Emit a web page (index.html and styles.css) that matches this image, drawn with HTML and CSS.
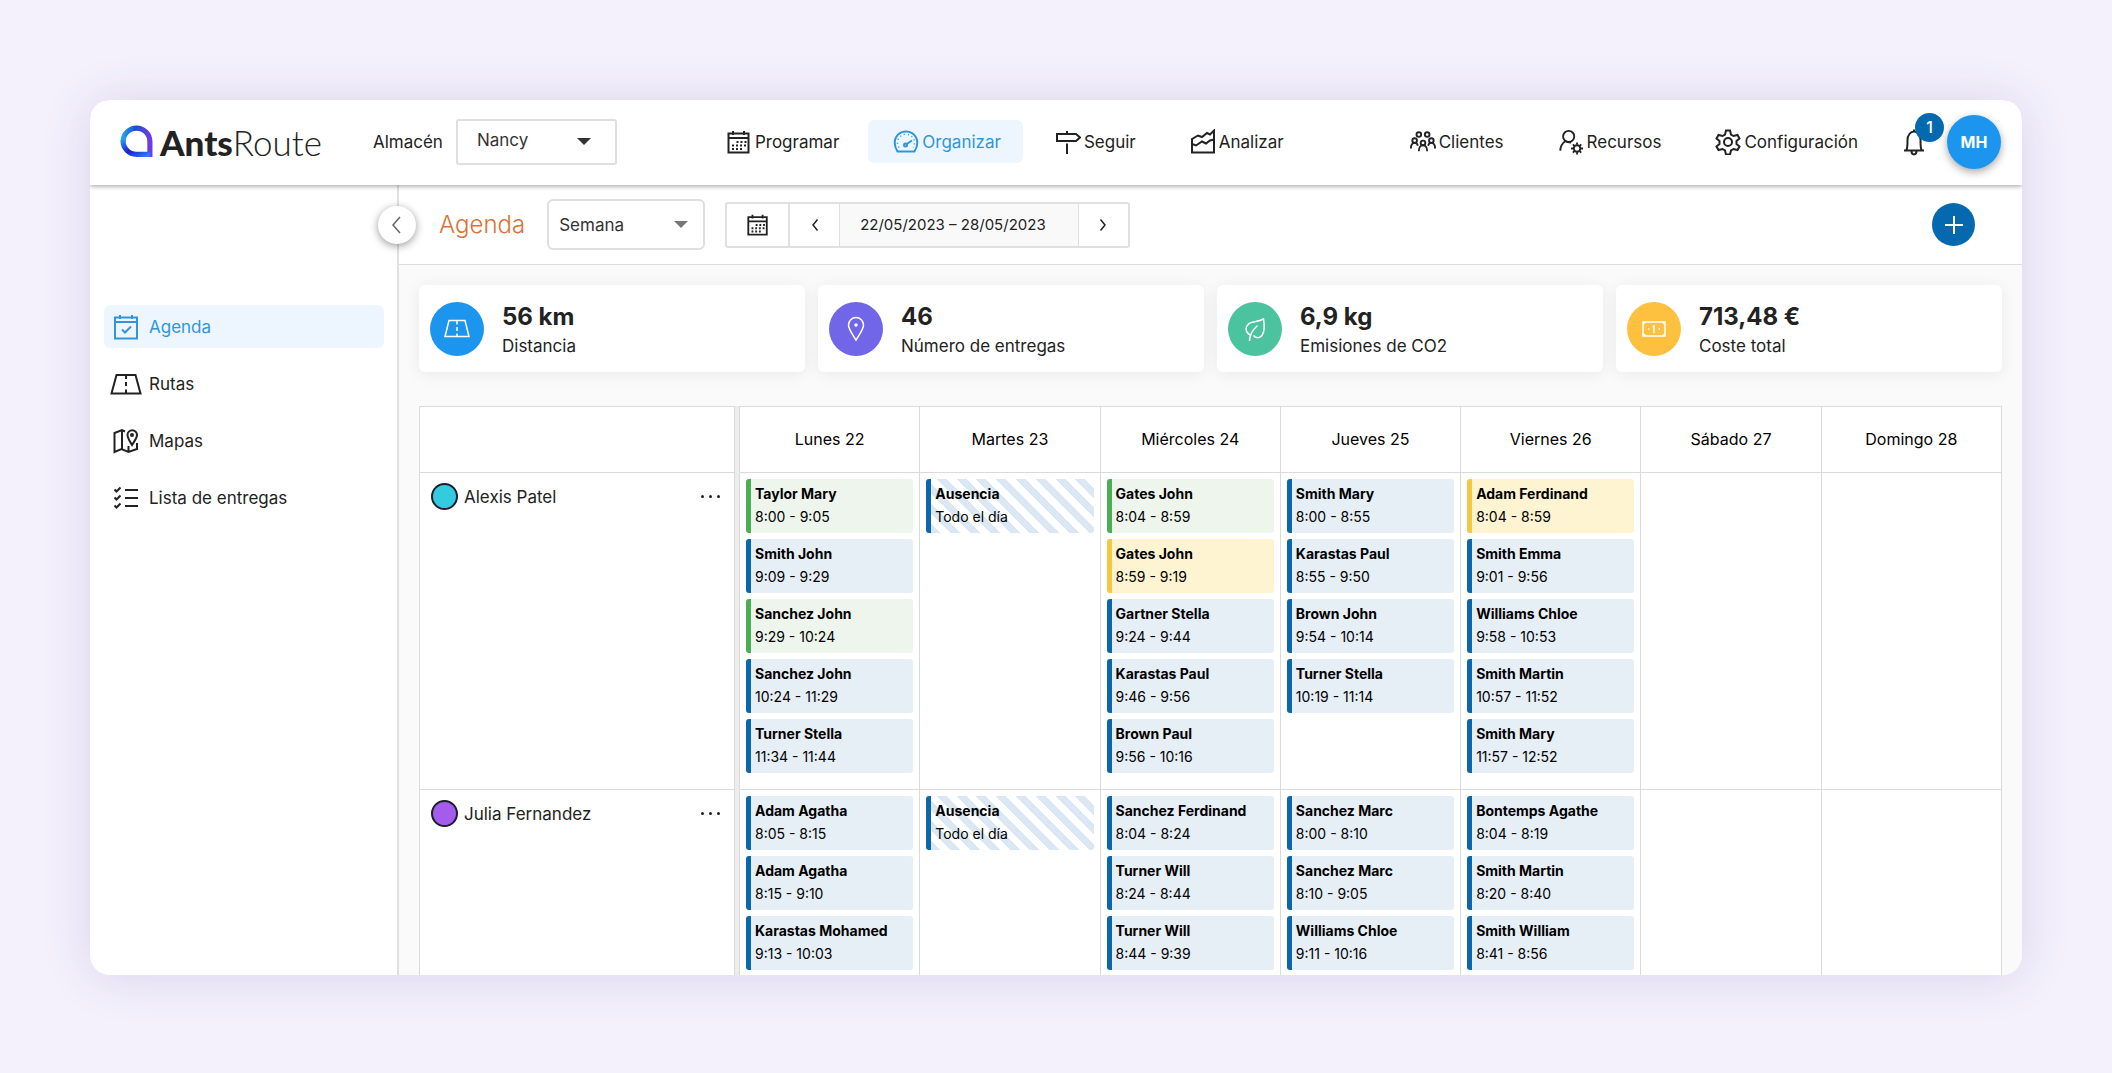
FILE: index.html
```
<!DOCTYPE html>
<html lang="es">
<head>
    <meta charset="UTF-8">
    <meta name="viewport" content="width=device-width, initial-scale=1.0">
    <title>AntsRoute - Agenda</title>
    <link rel="stylesheet" href="styles.css">
</head>
<body>
    <div class="app">
        <header class="topbar">
            <a class="logo" href="#">
                <svg viewBox="0 0 32 32" width="33" height="33" aria-hidden="true">
                    <defs>
                        <linearGradient id="logoTop" x1="0" y1="0" x2="1" y2="0">
                            <stop offset="0" stop-color="#22a3ea"/>
                            <stop offset="0.45" stop-color="#1a4fd6"/>
                            <stop offset="1" stop-color="#6d3be6"/>
                        </linearGradient>
                        <linearGradient id="logoBottom" x1="0" y1="0" x2="1" y2="1">
                            <stop offset="0" stop-color="#2a8df0"/>
                            <stop offset="0.5" stop-color="#1b1fd0"/>
                            <stop offset="1" stop-color="#2b7df2"/>
                        </linearGradient>
                    </defs>
                    <path d="M3 16A13 13 0 0 1 29 16V31" fill="none" stroke="url(#logoTop)" stroke-width="5"/>
                    <path d="M3 15A13 13 0 0 0 16 28.500H29" fill="none" stroke="url(#logoBottom)" stroke-width="5"/>
                </svg>
                <span><b>Ants</b>Route</span>
            </a>

            <div class="warehouse">
                <label for="warehouse">Almacén</label>
                <span class="select select-warehouse">
                    <select id="warehouse">
                        <option>Nancy</option>
                    </select>
                </span>
            </div>

            <nav class="nav nav-main">
                <a href="#">
                    <svg viewBox="0 0 26 26"><path d="M2.500 4.500h20v19h-20zM2.500 9h20"/><path d="M7 2v4M18 2v4"/><path d="M10.500 13h10M6 16.500h14M6 20h10" stroke-dasharray="2 2"/></svg>
                    Programar
                </a>
                <a href="#" class="active">
                    <svg viewBox="0 0 26 26"><path d="M4.500 22.500C-2 12 4 2.500 13 2.500S28 12 21.500 22.500z"/><path d="M6 18.500A8.500 8.500 0 1 1 20 18.500" stroke-width="1.500" stroke-dasharray="1 3"/><path d="M13 15.500l6-4"/><circle cx="12.500" cy="16" r="1.500"/></svg>
                    Organizar
                </a>
                <a href="#">
                    <svg viewBox="0 0 26 26"><path d="M2 5h19l4 3.500-4 3.500H2zM12 2v3M12 14.500V25"/></svg>
                    Seguir
                </a>
                <a href="#">
                    <svg viewBox="0 0 26 26"><path d="M2 23.500V10l6-3.500 4 1.500L17 4l3 1.500 4-4v22z"/><path d="M2 15l4 1.500 6-4 4 2 4-3 4-1"/></svg>
                    Analizar
                </a>
            </nav>

            <nav class="nav nav-side">
                <a href="#">
                    <svg viewBox="0 0 28 26"><circle cx="9.500" cy="5" r="2.500"/><circle cx="18.500" cy="5" r="2.500"/><circle cx="5" cy="11.500" r="2.500"/><circle cx="23" cy="11.500" r="2.500"/><circle cx="14" cy="14" r="2.500"/><path d="M1 20c0-4 2-6 4-6s3 1 3.500 3M27 20c0-4-2-6-4-6s-3 1-3.500 3M9.500 23c0-4 2-6.500 4.500-6.500s4.500 2.500 4.500 6.500"/></svg>
                    Clientes
                </a>
                <a href="#">
                    <svg viewBox="0 0 26 28"><circle cx="10.500" cy="8" r="6"/><path d="M1.500 23.500c0-5 2-8 5.500-10.500M7 13c2 1.500 4 1.500 6 1.500"/><circle cx="19.500" cy="21" r="3.500"/><path d="M19.500 14.500V17M19.500 25v2.500M13 21h2.500M23.500 21H26M15 16.500l2 2M22 23.500l2 2M15 25.500l2-2M22 18.500l2-2"/></svg>
                    Recursos
                </a>
                <a href="#">
                    <svg viewBox="0 0 26 26"><circle cx="13" cy="13" r="4"/><path d="M11 1.500h4l1 4 2.500 1.500 4-1 2 3.500-3 2.500v3l3 2.500-2 3.500-4-1-2.500 1.500-1 4h-4l-1-4-2.500-1.500-4 1-2-3.500 3-2.500v-3l-3-2.500 2-3.500 4 1L10 5.500z"/></svg>
                    Configuración
                </a>
            </nav>

            <div class="account">
                <button class="bell" type="button" aria-label="Notificaciones">
                    <svg viewBox="0 0 24 28"><path d="M12 1.500v2M2 22.500h20M4.500 22c1-2 1-4 1-10a6.500 8.500 0 0 1 13 0c0 6 0 8 1 10M9.500 23c0 4.500 5 4.500 5 0"/></svg>
                    <span class="badge">1</span>
                </button>
                <button class="avatar" type="button">MH</button>
            </div>
        </header>

        <div class="layout">
            <aside class="sidebar">
                <button class="collapse" type="button" aria-label="Contraer menú">
                    <svg viewBox="0 0 20 20"><path d="M13 2L6 10l7 8"/></svg>
                </button>
                <nav class="menu">
                    <a href="#" class="active">
                        <svg viewBox="0 0 32 28"><path d="M5 4.500h22v21H5zM5 9h22M10 2v4M22 2v4"/><path d="M12 16.500l3 3 6-6"/></svg>
                        Agenda
                    </a>
                    <a href="#">
                        <svg viewBox="0 0 32 28"><path d="M6.500 5h19l5 18.500h-29z"/><path d="M16 5v4M16 12v4M16 19.500v4"/></svg>
                        Rutas
                    </a>
                    <a href="#">
                        <svg viewBox="0 0 32 28"><path d="M15 4.500L12 3 4.500 6v19l7-3 7 3 8.500-3v-6M12 4v18M18.500 19v6"/><path d="M22 18c-3-5-4.500-7-4.500-10a4.500 4.500 0 0 1 9.500 0c0 3-2 5-5 10z"/><circle cx="22" cy="8" r="1" /></svg>
                        Mapas
                    </a>
                    <a href="#">
                        <svg viewBox="0 0 32 28"><path d="M4.500 5.500l2 2 4-4M4.500 13.500l2 2 4-4M4.500 21.500l2 2 4-4M15 6h13M15 14h13M15 22h13"/></svg>
                        Lista de entregas
                    </a>
                </nav>
            </aside>

            <main class="main">
                <div class="toolbar">
                    <h1>Agenda</h1>
                    <span class="select select-period">
                        <select id="period" aria-label="Periodo">
                            <option>Semana</option>
                        </select>
                    </span>
                    <div class="dates">
                        <button class="dates-calendar" type="button" aria-label="Calendario">
                            <svg viewBox="0 0 26 26"><path d="M2.500 4.500h20v19h-20zM2.500 9h20"/><path d="M7 2v4M18 2v4"/><path d="M10.500 13h10M6 16.500h14M6 20h10" stroke-dasharray="2 2"/></svg>
                        </button>
                        <button class="dates-arrow" type="button" aria-label="Anterior">
                            <svg viewBox="0 0 14 14"><path d="M9.500 1.500L5 7l4.500 5.500"/></svg>
                        </button>
                        <span class="dates-range">22/05/2023 – 28/05/2023</span>
                        <button class="dates-arrow" type="button" aria-label="Siguiente">
                            <svg viewBox="0 0 14 14"><path d="M4.500 1.500L9 7l-4.500 5.500"/></svg>
                        </button>
                    </div>
                    <button class="add" type="button" aria-label="Añadir">
                        <svg viewBox="0 0 20 20"><path d="M10 1v18M1 10h18"/></svg>
                    </button>
                </div>

                <div class="content">
                    <section class="stats">
                        <div class="stat">
                            <span class="stat-icon blue">
                                <svg viewBox="0 0 28 28"><path d="M6 5.500h16l4 16H2z"/><path d="M14 5.500v4M14 12v4M14 18.500v3"/></svg>
                            </span>
                            <div><strong>56 km</strong><span>Distancia</span></div>
                        </div>
                        <div class="stat">
                            <span class="stat-icon purple">
                                <svg viewBox="0 0 28 28"><path d="M14 25C9 17 6.500 14 6.500 10a7.500 7.500 0 0 1 15 0c0 4-2.500 7-7.500 15z"/><circle cx="14" cy="10" r="1"/></svg>
                            </span>
                            <div><strong>46</strong><span>Número de entregas</span></div>
                        </div>
                        <div class="stat">
                            <span class="stat-icon green">
                                <svg viewBox="0 0 28 28"><path d="M9 20C4 17 4 12 8 8.500c3-2 9-1.500 14.500-4.500 1 6 1 12-1 15.500-2 4-7 4-9 1"/><path d="M8.500 26c0-7 3-11 8-15.500"/></svg>
                            </span>
                            <div><strong>6,9 kg</strong><span>Emisiones de CO2</span></div>
                        </div>
                        <div class="stat">
                            <span class="stat-icon yellow">
                                <svg viewBox="0 0 28 28"><path d="M3 7h22v14H3z"/><path d="M3 9.500L5.500 7M25 9.500L22.500 7M3 18.500L5.500 21M25 18.500L22.500 21M12.500 12l1.500-1v7M8 14h1.500M18.500 14H20"/></svg>
                            </span>
                            <div><strong>713,48 €</strong><span>Coste total</span></div>
                        </div>
                    </section>

                    <table class="agenda">
                        <thead>
                            <tr>
                                <th class="resource"></th>
                                <th class="divider"></th>
                                <th>Lunes 22</th>
                                <th>Martes 23</th>
                                <th>Miércoles 24</th>
                                <th>Jueves 25</th>
                                <th>Viernes 26</th>
                                <th>Sábado 27</th>
                                <th>Domingo 28</th>
                            </tr>
                        </thead>
                        <tbody>
                            <tr>
                                <td class="resource">
                                    <div class="driver">
                                        <span class="dot cyan"></span>
                                        <span>Alexis Patel</span>
                                        <button class="more" type="button" aria-label="Opciones"><i></i><i></i><i></i></button>
                                    </div>
                                </td>
                                <td class="divider"></td>
                                <td>
                                    <div class="event done"><strong>Taylor Mary</strong><span>8:00 - 9:05</span></div>
                                    <div class="event"><strong>Smith John</strong><span>9:09 - 9:29</span></div>
                                    <div class="event done"><strong>Sanchez John</strong><span>9:29 - 10:24</span></div>
                                    <div class="event"><strong>Sanchez John</strong><span>10:24 - 11:29</span></div>
                                    <div class="event"><strong>Turner Stella</strong><span>11:34 - 11:44</span></div>
                                </td>
                                <td>
                                    <div class="event absence"><strong>Ausencia</strong><span>Todo el día</span></div>
                                </td>
                                <td>
                                    <div class="event done"><strong>Gates John</strong><span>8:04 - 8:59</span></div>
                                    <div class="event pending"><strong>Gates John</strong><span>8:59 - 9:19</span></div>
                                    <div class="event"><strong>Gartner Stella</strong><span>9:24 - 9:44</span></div>
                                    <div class="event"><strong>Karastas Paul</strong><span>9:46 - 9:56</span></div>
                                    <div class="event"><strong>Brown Paul</strong><span>9:56 - 10:16</span></div>
                                </td>
                                <td>
                                    <div class="event"><strong>Smith Mary</strong><span>8:00 - 8:55</span></div>
                                    <div class="event"><strong>Karastas Paul</strong><span>8:55 - 9:50</span></div>
                                    <div class="event"><strong>Brown John</strong><span>9:54 - 10:14</span></div>
                                    <div class="event"><strong>Turner Stella</strong><span>10:19 - 11:14</span></div>
                                </td>
                                <td>
                                    <div class="event pending"><strong>Adam Ferdinand</strong><span>8:04 - 8:59</span></div>
                                    <div class="event"><strong>Smith Emma</strong><span>9:01 - 9:56</span></div>
                                    <div class="event"><strong>Williams Chloe</strong><span>9:58 - 10:53</span></div>
                                    <div class="event"><strong>Smith Martin</strong><span>10:57 - 11:52</span></div>
                                    <div class="event"><strong>Smith Mary</strong><span>11:57 - 12:52</span></div>
                                </td>
                                <td></td>
                                <td></td>
                            </tr>
                            <tr>
                                <td class="resource">
                                    <div class="driver">
                                        <span class="dot violet"></span>
                                        <span>Julia Fernandez</span>
                                        <button class="more" type="button" aria-label="Opciones"><i></i><i></i><i></i></button>
                                    </div>
                                </td>
                                <td class="divider"></td>
                                <td>
                                    <div class="event"><strong>Adam Agatha</strong><span>8:05 - 8:15</span></div>
                                    <div class="event"><strong>Adam Agatha</strong><span>8:15 - 9:10</span></div>
                                    <div class="event"><strong>Karastas Mohamed</strong><span>9:13 - 10:03</span></div>
                                </td>
                                <td>
                                    <div class="event absence"><strong>Ausencia</strong><span>Todo el día</span></div>
                                </td>
                                <td>
                                    <div class="event"><strong>Sanchez Ferdinand</strong><span>8:04 - 8:24</span></div>
                                    <div class="event"><strong>Turner Will</strong><span>8:24 - 8:44</span></div>
                                    <div class="event"><strong>Turner Will</strong><span>8:44 - 9:39</span></div>
                                </td>
                                <td>
                                    <div class="event"><strong>Sanchez Marc</strong><span>8:00 - 8:10</span></div>
                                    <div class="event"><strong>Sanchez Marc</strong><span>8:10 - 9:05</span></div>
                                    <div class="event"><strong>Williams Chloe</strong><span>9:11 - 10:16</span></div>
                                </td>
                                <td>
                                    <div class="event"><strong>Bontemps Agathe</strong><span>8:04 - 8:19</span></div>
                                    <div class="event"><strong>Smith Martin</strong><span>8:20 - 8:40</span></div>
                                    <div class="event"><strong>Smith William</strong><span>8:41 - 8:56</span></div>
                                </td>
                                <td></td>
                                <td></td>
                            </tr>
                        </tbody>
                    </table>
                </div>
            </main>
        </div>
    </div>
</body>
</html>
```
FILE: styles.css
```
* {
    box-sizing: border-box;
}
body {
    font-family: Inter, "Liberation Sans", sans-serif;
    font-size: 17px;
    color: #222;
    margin: 0;
    padding: 100px 90px 98px;
    height: 100vh;
    background-color: #f4f1fd;
}
a {
    color: inherit;
    text-decoration: none;
}
button {
    font: inherit;
    color: inherit;
    padding: 0;
    border: none;
    background: none;
    cursor: pointer;
}
svg {
    display: block;
    flex-shrink: 0;
    fill: none;
    stroke: currentColor;
    stroke-width: 2;
}
.app {
    display: flex;
    flex-direction: column;
    height: 100%;
    overflow: hidden;
    background-color: #fff;
    border-radius: 20px;
    box-shadow: 0 2px 50px rgba(60, 45, 110, 0.14);
}

/* header */
.topbar {
    display: flex;
    align-items: center;
    flex-shrink: 0;
    height: 85px;
    padding: 0 21px 2px 30px;
    background-color: #fff;
    box-shadow: 0 1px 5px rgba(0, 0, 0, 0.4);
    position: relative;
    z-index: 2;
}
.logo {
    display: flex;
    align-items: center;
    gap: 7px;
    font-family: Lato, sans-serif;
    font-size: 35px;
    font-weight: 300;
    line-height: 40px;
}
.logo b {
    font-weight: 900;
}
.warehouse {
    display: flex;
    align-items: center;
    gap: 13px;
    margin-left: 51px;
}
.select {
    display: block;
    position: relative;
}
.select::after {
    content: "";
    position: absolute;
    top: 50%;
    right: 26px;
    margin-top: -4px;
    border: 7px solid transparent;
    border-top-color: #333;
    border-bottom: none;
    pointer-events: none;
}
.select select {
    width: 100%;
    height: 100%;
    appearance: none;
    font: inherit;
    color: #333;
    background-color: #fff;
    border: 2px solid #dfdfdf;
    border-radius: 3px;
}
.select-warehouse {
    width: 161px;
    height: 46px;
}
.select-warehouse select {
    padding: 0 19px 4px;
}
.nav {
    display: flex;
    gap: 7px;
}
.nav a {
    display: flex;
    align-items: center;
    gap: 3px;
    height: 43px;
    padding: 0 22px 0 25px;
    border-radius: 6px;
}
.nav svg {
    width: 26px;
    height: 26px;
}
.nav-main {
    margin-left: 84px;
}
.nav-side {
    margin-left: auto;
}
.nav .active,
.menu .active {
    color: #2f96dd;
    background-color: #edf6fe;
}
.account {
    display: flex;
    align-items: center;
    gap: 21px;
    margin-left: 22px;
}
.bell {
    position: relative;
}
.bell svg {
    width: 24px;
    height: 28px;
}
.badge {
    position: absolute;
    top: -15px;
    right: -18px;
    width: 29px;
    height: 29px;
    border-radius: 50%;
    background-color: #0569b0;
    color: #fff;
    font-size: 16px;
    font-weight: 500;
    line-height: 29px;
}
.avatar {
    width: 54px;
    height: 54px;
    border-radius: 50%;
    background-color: #1c95ef;
    color: #fff;
    font-size: 16px;
    font-weight: 700;
    box-shadow: 0 3px 8px rgba(0, 0, 0, 0.35);
}

/* sidebar */
.layout {
    display: flex;
    flex: 1;
    min-height: 0;
}
.sidebar {
    position: relative;
    z-index: 1;
    flex-shrink: 0;
    width: 309px;
    padding: 120px 13px 0 14px;
    border-right: 2px solid #e0e0e0;
}
.collapse {
    position: absolute;
    top: 21px;
    right: -19px;
    display: flex;
    align-items: center;
    justify-content: center;
    width: 38px;
    height: 38px;
    border-radius: 50%;
    background-color: #fff;
    color: #666;
    box-shadow: 0 2px 8px rgba(0, 0, 0, 0.4);
}
.collapse svg {
    width: 20px;
    height: 20px;
    stroke-width: 1.5;
}
.menu {
    display: flex;
    flex-direction: column;
    gap: 14px;
}
.menu a {
    display: flex;
    align-items: center;
    gap: 7px;
    height: 43px;
    padding-left: 6px;
    border-radius: 6px;
}
.menu svg {
    width: 32px;
    height: 28px;
}

/* toolbar */
.main {
    display: flex;
    flex-direction: column;
    flex: 1;
    min-width: 0;
}
.toolbar {
    display: flex;
    align-items: center;
    flex-shrink: 0;
    height: 80px;
    padding: 0 47px 0 40px;
    border-bottom: 1px solid #dcdcdc;
}
.toolbar h1 {
    margin: 0 22px 0 0;
    color: #d97337;
    font-size: 24px;
    font-weight: 300;
}
.select-period {
    width: 158px;
    height: 51px;
    margin-right: 20px;
}
.select-period select {
    padding: 0 10px;
    border-radius: 6px;
}
.select-period::after {
    right: 17px;
    border-top-color: #777;
}
.dates {
    display: flex;
    height: 46px;
    border: 2px solid #e0e0e0;
    border-radius: 3px;
}
.dates button {
    display: flex;
    align-items: center;
    justify-content: center;
}
.dates-calendar {
    width: 63px;
}
.dates-calendar svg {
    width: 24px;
    height: 24px;
}
.dates-arrow {
    width: 49px;
}
.dates-arrow svg {
    width: 14px;
    height: 14px;
    stroke-width: 1.5;
}
.dates .dates-calendar {
    border-right: 2px solid #e0e0e0;
}
.dates-range {
    padding: 0 32px 0 20px;
    border: 1px solid #e0e0e0;
    border-width: 0 1px;
    background-color: #f9f9f9;
    font-size: 15px;
    line-height: 42px;
}
.add {
    display: flex;
    align-items: center;
    justify-content: center;
    width: 43px;
    height: 43px;
    margin-left: auto;
    border-radius: 50%;
    background-color: #0569b0;
    color: #fff;
}
.add svg {
    width: 20px;
    height: 20px;
}

/* stats */
.content {
    flex: 1;
    min-height: 0;
    padding: 20px;
    overflow: hidden;
    background-color: #fafafa;
}
.stats {
    display: grid;
    grid-template-columns: repeat(4, 1fr);
    gap: 13px;
    margin-bottom: 34px;
}
.stat {
    display: flex;
    align-items: center;
    gap: 18px;
    height: 87px;
    padding-left: 11px;
    background-color: #fff;
    border-radius: 6px;
    box-shadow: 0 2px 16px rgba(0, 0, 0, 0.07);
}
.stat div {
    display: flex;
    flex-direction: column;
    padding-top: 4px;
}
.stat strong {
    font-size: 24px;
    line-height: 30px;
}
.stat div span {
    line-height: 28px;
}
.stat-icon {
    display: flex;
    align-items: center;
    justify-content: center;
    width: 54px;
    height: 54px;
    border-radius: 50%;
    color: #fff;
}
.stat-icon svg {
    width: 28px;
    height: 28px;
    stroke-width: 1.5;
}
.blue {
    background-color: #1c95ef;
}
.purple {
    background-color: #7165e8;
}
.green {
    background-color: #4cc39f;
}
.yellow {
    background-color: #fdc13f;
}

/* agenda */
.agenda {
    width: 100%;
    table-layout: fixed;
    border-collapse: collapse;
    background-color: #fff;
}
.agenda th,
.agenda td {
    border: 1px solid #dadada;
}
.agenda th {
    height: 66px;
    padding: 0 0 2px;
    color: #000;
    font-size: 16px;
    font-weight: 400;
}
.agenda td {
    height: 317px;
    padding: 6px 6px 0;
    vertical-align: top;
}
.agenda .resource {
    width: 315px;
}
.agenda .divider {
    width: 5px;
    padding: 0;
    background-color: #ececec;
    border-top-color: #ececec;
    border-bottom-color: #ececec;
}
.driver {
    display: flex;
    align-items: center;
    gap: 6px;
    padding: 4px 8px 0 5px;
}
.dot {
    width: 27px;
    height: 27px;
    border: 2px solid #1d1d2b;
    border-radius: 50%;
}
.cyan {
    background-color: #33cbe0;
}
.violet {
    background-color: #a45cec;
}
.more {
    display: flex;
    gap: 5px;
    margin-left: auto;
}
.more i {
    width: 3px;
    height: 3px;
    border-radius: 50%;
    background-color: #222;
}
.event {
    display: flex;
    flex-direction: column;
    height: 54px;
    margin-bottom: 6px;
    padding: 3px 0 0 4px;
    border-left: 5px solid #0b67a9;
    border-radius: 3px;
    background-color: #e6eef6;
    color: #000;
    font-size: 14px;
    line-height: 23px;
}
.event strong {
    font-weight: 700;
}
.done {
    border-color: #4bad56;
    background-color: #edf5ec;
}
.pending {
    border-color: #f3c843;
    background-color: #fef4d1;
}
.absence {
    background: repeating-linear-gradient(45deg, #dbe8f3 0, #dbe8f3 7px, #fff 7px, #fff 14px);
}
```
